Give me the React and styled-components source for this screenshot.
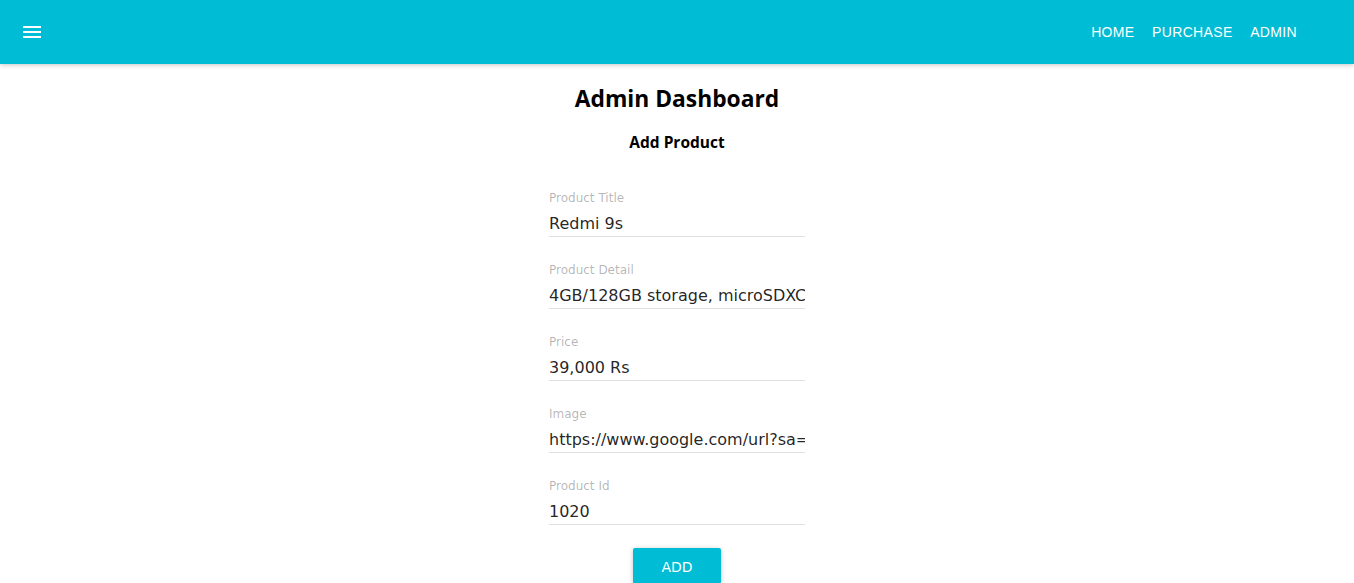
import React, { useState } from "react";
import styled, { createGlobalStyle } from "styled-components";

const GlobalStyle = createGlobalStyle`
  html, body {
    margin: 0;
    padding: 0;
    background: #fff;
    font-family: "DejaVu Sans", sans-serif;
  }
`;

const AppBar = styled.header`
  height: 64px;
  background-color: #00bcd4;
  display: flex;
  align-items: center;
  justify-content: space-between;
  padding: 0 57px 0 20px;
  box-shadow: 0 1px 6px rgba(0, 0, 0, 0.12), 0 1px 4px rgba(0, 0, 0, 0.12);
  position: relative;
  z-index: 1;
`;

const MenuButton = styled.button`
  width: 24px;
  height: 24px;
  padding: 0;
  border: none;
  background: none;
  display: flex;
  cursor: pointer;
`;

const Nav = styled.nav`
  display: flex;
  gap: 17.5px;
`;

const NavLink = styled.a`
  font-family: "Liberation Sans", Arial, sans-serif;
  font-size: 14px;
  letter-spacing: 0.35px;
  color: #fff;
  text-transform: uppercase;
  text-decoration: none;
  cursor: pointer;
`;

const Main = styled.main`
  display: flex;
  flex-direction: column;
  align-items: center;
  padding-top: 19px;
`;

const Title = styled.h1`
  margin: 0;
  font-family: "Open Sans", sans-serif;
  font-weight: 700;
  font-size: 22.8px;
  line-height: 32px;
  color: #000;
`;

const SubTitle = styled.h3`
  margin: 15px 0 30px;
  font-family: "Open Sans", sans-serif;
  font-weight: 700;
  font-size: 15.5px;
  line-height: 24px;
  color: #000;
`;

const Form = styled.form`
  display: flex;
  flex-direction: column;
  align-items: center;
`;

const FieldBox = styled.div`
  width: 256px;
  height: 72px;
  padding-top: 6px;
  box-sizing: border-box;
`;

const Label = styled.label`
  display: block;
  font-size: 12px;
  line-height: 16px;
  color: rgba(0, 0, 0, 0.3);
`;

const Input = styled.input`
  display: block;
  width: 100%;
  box-sizing: border-box;
  margin-top: 5px;
  padding: 0;
  border: none;
  border-bottom: 1px solid #e0e0e0;
  outline: none;
  height: 26px;
  font-family: "DejaVu Sans", sans-serif;
  font-size: 16px;
  line-height: 24px;
  color: rgba(0, 0, 0, 0.87);
  background: transparent;
`;

const AddButton = styled.button`
  margin-top: 4px;
  width: 88px;
  height: 36px;
  padding: 2px 0 0;
  border: none;
  border-radius: 2px;
  background-color: #00bcd4;
  color: #fff;
  font-family: "DejaVu Sans", sans-serif;
  font-size: 14px;
  text-transform: uppercase;
  box-shadow: 0 1px 6px rgba(0, 0, 0, 0.12), 0 1px 4px rgba(0, 0, 0, 0.12);
  cursor: pointer;
`;

const MenuIcon = () => (
  <svg width="24" height="24" viewBox="0 0 24 24" fill="#fff">
    <path d="M3 18h18v-2H3v2zm0-5h18v-2H3v2zm0-7v2h18V6H3z" />
  </svg>
);

const fields = [
  { name: "title", label: "Product Title", value: "Redmi 9s" },
  { name: "detail", label: "Product Detail", value: "4GB/128GB storage, microSDXC" },
  { name: "price", label: "Price", value: "39,000 Rs" },
  { name: "image", label: "Image", value: "https://www.google.com/url?sa=i&url=redmi" },
  { name: "id", label: "Product Id", value: "1020" },
];

const App = () => {
  const [values, setValues] = useState(
    Object.fromEntries(fields.map((f) => [f.name, f.value]))
  );

  return (
    <>
      <GlobalStyle />
      <AppBar>
        <MenuButton aria-label="menu">
          <MenuIcon />
        </MenuButton>
        <Nav>
          <NavLink>Home</NavLink>
          <NavLink>Purchase</NavLink>
          <NavLink>Admin</NavLink>
        </Nav>
      </AppBar>
      <Main>
        <Title>Admin Dashboard</Title>
        <SubTitle>Add Product</SubTitle>
        <Form onSubmit={(e) => e.preventDefault()}>
          {fields.map((f) => (
            <FieldBox key={f.name}>
              <Label htmlFor={f.name}>{f.label}</Label>
              <Input
                id={f.name}
                value={values[f.name]}
                onChange={(e) => setValues({ ...values, [f.name]: e.target.value })}
              />
            </FieldBox>
          ))}
          <AddButton type="submit">Add</AddButton>
        </Form>
      </Main>
    </>
  );
};

export default App;
